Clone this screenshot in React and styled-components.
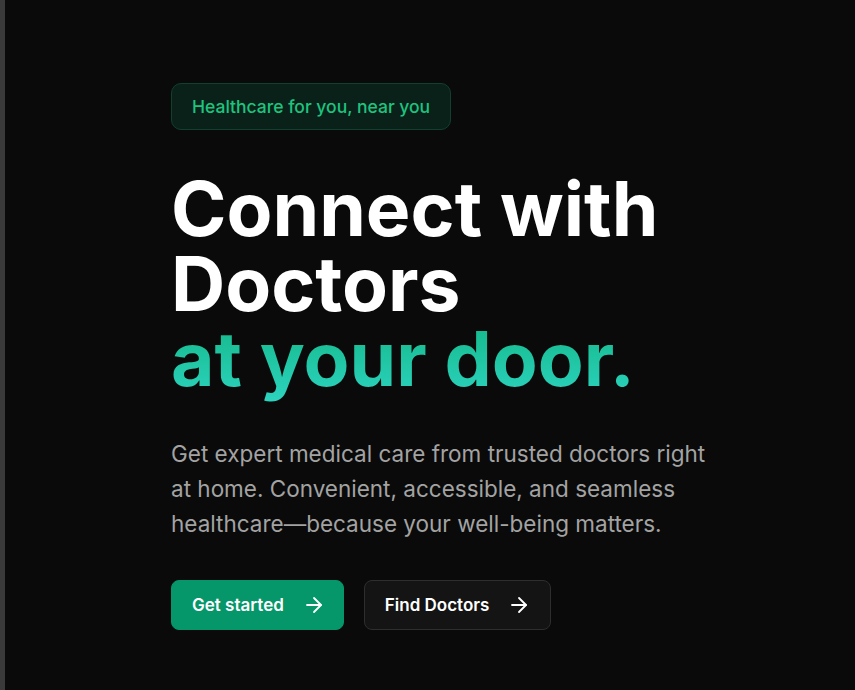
import React from "react";
import styled, { createGlobalStyle } from "styled-components";

const Global = createGlobalStyle`
  html, body { margin: 0; padding: 0; background: #0a0a0a; }
  body { font-family: Inter, "Noto Sans", sans-serif; -webkit-font-smoothing: antialiased; }
`;

const Page = styled.main`
  min-height: 690px;
  box-sizing: border-box;
  background: #0a0a0a;
  border-left: 5px solid #3a3a3a;
  padding: 83px 0 0 166px;
`;

const Content = styled.div`
  display: flex;
  flex-direction: column;
  align-items: flex-start;
  max-width: 560px;
`;

const Badge = styled.div`
  display: inline-flex;
  align-items: center;
  height: 47px;
  box-sizing: border-box;
  padding: 0 20px;
  border-radius: 10px;
  background: #0a211a;
  border: 1px solid #11402d;
  color: #1ec47e;
  font-size: 17.5px;
  font-weight: 500;
`;

const Title = styled.h1`
  margin: 41px 0 0;
  font-size: 75px;
  line-height: 75px;
  font-weight: 700;
  letter-spacing: 0;
  color: #ffffff;
`;

const Accent = styled.span`
  display: block;
  background: linear-gradient(180deg, #14b88a 0%, #2dd4bf 100%);
  -webkit-background-clip: text;
  background-clip: text;
  color: transparent;
  padding-bottom: 6px;
`;

const Lead = styled.p`
  margin: 34px 0 0;
  font-size: 22.5px;
  line-height: 35px;
  color: #a3a3a3;
  max-width: 560px;
`;

const Actions = styled.div`
  display: flex;
  gap: 20px;
  margin-top: 39px;
`;

const Button = styled.button`
  display: inline-flex;
  align-items: center;
  gap: 18px;
  height: 50px;
  box-sizing: border-box;
  padding: 0 ${(p) => (p.$primary ? "17px" : "19px")} 0 20px;
  border-radius: 8px;
  font-family: inherit;
  font-size: 17px;
  font-weight: 600;
  color: #ffffff;
  cursor: pointer;
  background: ${(p) => (p.$primary ? "#059669" : "#141414")};
  border: 1px solid ${(p) => (p.$primary ? "#059669" : "#2e2e2e")};
`;

const Arrow = () => (
  <svg width="24" height="24" viewBox="0 0 24 24" fill="none" stroke="currentColor" strokeWidth="1.8" strokeLinecap="round" strokeLinejoin="round">
    <path d="M5 12h14" />
    <path d="m12 5 7 7-7 7" />
  </svg>
);

export default function App() {
  return (
    <>
      <Global />
      <Page>
        <Content>
          <Badge>Healthcare for you, near you</Badge>
          <Title>
            Connect with
            <br />
            Doctors
            <Accent>at your door.</Accent>
          </Title>
          <Lead>
            Get expert medical care from trusted doctors right at home. Convenient, accessible, and seamless
            healthcare—because your well-being matters.
          </Lead>
          <Actions>
            <Button $primary>
              Get started
              <Arrow />
            </Button>
            <Button>
              Find Doctors
              <Arrow />
            </Button>
          </Actions>
        </Content>
      </Page>
    </>
  );
}
